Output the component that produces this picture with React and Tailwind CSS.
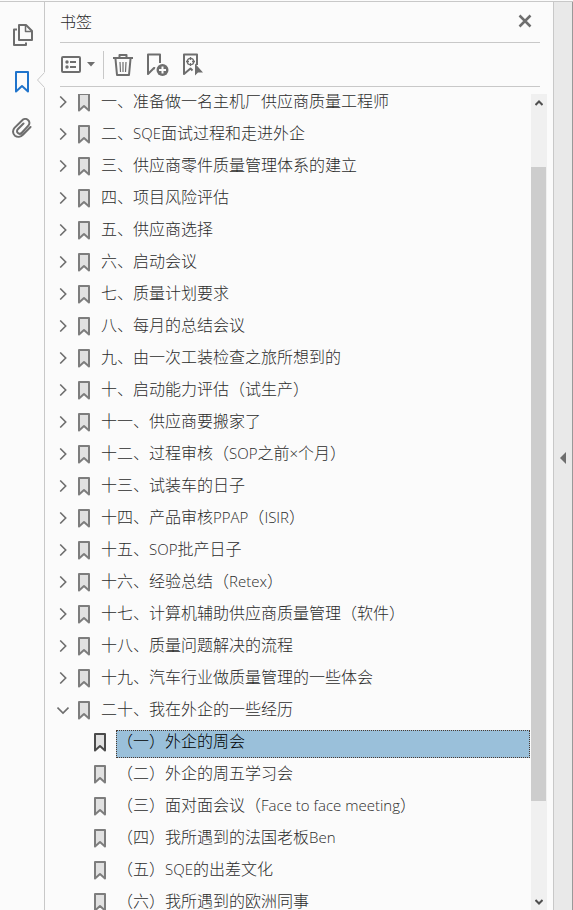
import React, { useState } from 'react';
import clsx from 'clsx';

const bookmarks = [
  { title: '一、准备做一名主机厂供应商质量工程师' },
  { title: '二、SQE面试过程和走进外企' },
  { title: '三、供应商零件质量管理体系的建立' },
  { title: '四、项目风险评估' },
  { title: '五、供应商选择' },
  { title: '六、启动会议' },
  { title: '七、质量计划要求' },
  { title: '八、每月的总结会议' },
  { title: '九、由一次工装检查之旅所想到的' },
  { title: '十、启动能力评估（试生产）' },
  { title: '十一、供应商要搬家了' },
  { title: '十二、过程审核（SOP之前×个月）' },
  { title: '十三、试装车的日子' },
  { title: '十四、产品审核PPAP（ISIR）' },
  { title: '十五、SOP批产日子' },
  { title: '十六、经验总结（Retex）' },
  { title: '十七、计算机辅助供应商质量管理（软件）' },
  { title: '十八、质量问题解决的流程' },
  { title: '十九、汽车行业做质量管理的一些体会' },
  {
    title: '二十、我在外企的一些经历',
    children: [
      '（一）外企的周会',
      '（二）外企的周五学习会',
      '（三）面对面会议（Face to face meeting）',
      '（四）我所遇到的法国老板Ben',
      '（五）SQE的出差文化',
      '（六）我所遇到的欧洲同事',
    ],
  },
];

const PagesIcon = () => (
  <svg width="22" height="22" viewBox="-2 0 22 22" fill="none" stroke="#6e6e6e" strokeWidth="2" strokeLinejoin="round">
    <path d="M6 1h7l6 6v9H6z" />
    <path d="M12.5 1v6.5H19" strokeWidth="1.5" />
    <path d="M4 5.5H1V21h12v-2.5" />
  </svg>
);

const RailBookmarkIcon = () => (
  <svg width="14" height="22" viewBox="0 0 14 22" fill="none" stroke="#1f74cc" strokeWidth="2" strokeLinejoin="round">
    <path d="M1 1h12v19.5l-6-5.5-6 5.5z" />
  </svg>
);

const PaperclipIcon = () => (
  <svg width="20" height="20" viewBox="0 0 20 20" fill="none" stroke="#6e6e6e" strokeWidth="2" strokeLinecap="round">
    <path d="M18.5 9l-7.6 7.8c-2.2 2.3-5.5 2.8-7.9.9-2.4-2-2.6-5.4-.5-7.8L10 2.500c1.600-1.800 4.300-2.100 6-.6 1.800 1.500 1.900 4 .3 5.800l-6.500 7c-1.100 1.200-2.800 1.400-3.900.4-1.100-.9-1.200-2.600-.1-3.800L11.500 5.500" />
  </svg>
);

const OptionsIcon = () => (
  <svg width="20" height="17" viewBox="0 0 20 17" fill="none" stroke="#6e6e6e" strokeWidth="2">
    <rect x="1" y="1" width="18" height="15" rx="1" />
    <path d="M9 6h6M9 11h6" />
    <circle cx="6" cy="6" r="1.7" fill="#6e6e6e" stroke="none" />
    <circle cx="6" cy="11" r="1.7" fill="#6e6e6e" stroke="none" />
  </svg>
);

const TrashIcon = () => (
  <svg width="20" height="22" viewBox="0 0 20 22" fill="none" stroke="#6e6e6e" strokeWidth="2">
    <path d="M0 4h20M6.5 4V1h7v3" strokeLinejoin="round" />
    <path d="M2.5 5l1.5 16h12l1.5-16" strokeLinejoin="round" />
    <path d="M7 8l.5 10M10 8v10M13 8l-.5 10" strokeWidth="1.2" />
  </svg>
);

const AddBookmarkIcon = () => (
  <svg width="23" height="23" viewBox="0 0 23 23" fill="none">
    <path d="M9 15.5L8 15l-6 6V1.5h12V10" stroke="#6e6e6e" strokeWidth="2" strokeLinejoin="round" />
    <circle cx="16.5" cy="17" r="6" fill="#6e6e6e" />
    <path d="M16.5 13.5v7M13 17h7" stroke="#fbfbfb" strokeWidth="2" />
  </svg>
);

const FindBookmarkIcon = () => (
  <svg width="21" height="23" viewBox="0 0 21 23" fill="none" stroke="#6e6e6e">
    <path d="M10.5 17.5l-2-2L2 21V1.5h13V12" strokeWidth="2" strokeLinejoin="round" />
    <circle cx="8.5" cy="8.5" r="3.2" strokeWidth="1.3" />
    <path d="M8.5 4v3M8.5 10v3M4 8.5h3M10 8.5h3" strokeWidth="1.3" />
    <path d="M13 10.5v12l3-3h5z" fill="#6e6e6e" stroke="none" />
  </svg>
);

const ItemBookmarkIcon = ({ active }) => (
  <svg className="shrink-0" width="12" height="19" viewBox="0 0 12 19" fill="#e1e1e1" stroke={active ? '#4b4b4b' : '#7d7d7d'} strokeWidth="2" strokeLinejoin="round">
    <path d="M1 1h10v16.5l-5-4.5-5 4.5z" />
  </svg>
);

const Chevron = ({ open }) => (
  <svg width="12" height="12" viewBox="0 0 12 12" fill="none" stroke="#6e6e6e" strokeWidth="1.6">
    {open ? <path d="M0.5 3.5L6 9l5.5-5.5" /> : <path d="M3.2 0.5L8.7 6l-5.5 5.5" />}
  </svg>
);

const ScrollArrow = ({ up }) => (
  <svg width="8" height="6" viewBox="0 0 8 6" fill="none" stroke="#505050" strokeWidth="2">
    {up ? <path d="M0.5 5L4 1.5 7.5 5" /> : <path d="M0.5 1L4 4.5 7.5 1" />}
  </svg>
);

// Latin runs get their own face, a size smaller than the Chinese text
const MixedText = ({ text }) => (
  <span>
    {text.split(/([A-Za-z×][A-Za-z× ]*)/).map((part, i) =>
      i % 2 ? <span key={i} className="font-['Open_Sans',sans-serif] text-[15px] leading-[18px]">{part}</span> : part
    )}
  </span>
);

const Label = ({ title, active, onClick }) => (
  <button
    onClick={onClick}
    className={clsx(
      'mt-1 flex h-7 min-w-0 flex-1 items-start border text-left leading-[18px] whitespace-nowrap',
      active ? 'border-dotted border-[#4a3a30] bg-[#9ac0da] text-black' : 'border-transparent'
    )}
  >
    <MixedText text={title} />
  </button>
);

export default function App() {
  const [selected, setSelected] = useState('（一）外企的周会');
  const [expanded, setExpanded] = useState(['二十、我在外企的一些经历']);

  const toggle = (title) => {
    setExpanded((prev) => (prev.includes(title) ? prev.filter((t) => t !== title) : [...prev, title]));
  };

  return (
    <div className="flex h-screen flex-col bg-[#fbfbfb] pt-px font-['Noto_Sans_CJK_SC',sans-serif] text-base font-light text-[#2b2b2b]">
      <div className="flex min-h-0 flex-1 border-t border-[#c8c8c8]">
        {/* Left rail */}
        <nav className="relative flex w-[45px] shrink-0 flex-col items-center gap-[25px] border-r border-[#c8c8c8] pt-[22px]">
          <button aria-label="页面缩略图"><PagesIcon /></button>
          <button aria-label="书签"><RailBookmarkIcon /></button>
          <button aria-label="附件"><PaperclipIcon /></button>
          <svg className="absolute top-[70px] -right-px" width="8" height="16" viewBox="0 0 8 16" fill="#fbfbfb">
            <path d="M8 0v16" stroke="#fbfbfb" strokeWidth="2" />
            <path d="M7.5 0.5L0.5 8l7 7.5" stroke="#c8c8c8" />
          </svg>
        </nav>

        {/* Bookmarks panel */}
        <main className="flex min-w-0 flex-1 flex-col">
          <header className="mr-[13px] ml-[15px] flex h-[41px] shrink-0 items-center justify-between border-b border-[#c8c8c8] pr-2 pb-0.5">
            <h1 className="leading-[18px]">书签</h1>
            <button aria-label="关闭">
              <svg width="14" height="14" viewBox="0 0 14 14" stroke="#6e6e6e" strokeWidth="2.5">
                <path d="M1.5 1.5l11 11M12.5 1.5l-11 11" />
              </svg>
            </button>
          </header>

          <div className="mr-[13px] ml-[15px] flex h-11 shrink-0 items-center border-b border-[#c8c8c8]">
            <button aria-label="选项" className="flex items-center gap-1.5 pl-px">
              <OptionsIcon />
              <svg width="8" height="5" viewBox="0 0 8 5" fill="#6e6e6e"><path d="M0 0h8L4 4.5z" /></svg>
            </button>
            <div className="mr-[9px] ml-2 h-7 w-px bg-[#c8c8c8]" />
            <div className="flex items-center gap-[13px]">
              <button aria-label="删除"><TrashIcon /></button>
              <button aria-label="新建书签"><AddBookmarkIcon /></button>
              <button aria-label="查找当前书签"><FindBookmarkIcon /></button>
            </div>
          </div>

          <div className="mt-[7px] mr-1.5 flex min-h-0 flex-1">
            <div className="min-w-0 flex-1 overflow-hidden pr-px">
              <ul className="-mt-2">
                {bookmarks.map(({ title, children }) => {
                  const open = expanded.includes(title);
                  return (
                    <li key={title}>
                      <div className="flex h-8 items-center pl-3">
                        <button aria-label={open ? '折叠' : '展开'} onClick={() => toggle(title)} className="mr-[9px]">
                          <Chevron open={open && !!children} />
                        </button>
                        <ItemBookmarkIcon active={selected === title} />
                        <div className="flex min-w-0 flex-1 pl-2.5">
                          <Label title={title} active={selected === title} onClick={() => setSelected(title)} />
                        </div>
                      </div>
                      {open && children && (
                        <ul>
                          {children.map((child) => (
                            <li key={child} className="flex h-8 items-center pl-[49px]">
                              <ItemBookmarkIcon active={selected === child} />
                              <div className="flex min-w-0 flex-1 pl-2.5">
                                <Label title={child} active={selected === child} onClick={() => setSelected(child)} />
                              </div>
                            </li>
                          ))}
                        </ul>
                      )}
                    </li>
                  );
                })}
              </ul>
            </div>

            {/* Scrollbar */}
            <div className="flex w-4 shrink-0 flex-col bg-[#f0f0f0]">
              <button aria-label="向上滚动" className="flex h-[18px] items-center justify-center"><ScrollArrow up /></button>
              <div className="flex flex-1 flex-col pr-px">
                <div className="flex-[55]" />
                <div className="flex-[634] bg-[#cdcdcd]" />
                <div className="flex-[93]" />
              </div>
              <button aria-label="向下滚动" className="flex h-4 items-center justify-center"><ScrollArrow /></button>
            </div>
          </div>
        </main>

        {/* Collapsed right pane */}
        <aside className="flex w-5 shrink-0 items-center justify-center border-r border-l border-r-[#999999] border-l-[#c8c8c8] bg-[#e9e9e9] pt-1">
          <button aria-label="展开右侧窗格">
            <svg width="6" height="12" viewBox="0 0 6 12" fill="#6e6e6e"><path d="M6 0v12L0 6z" /></svg>
          </button>
        </aside>
      </div>
    </div>
  );
}
